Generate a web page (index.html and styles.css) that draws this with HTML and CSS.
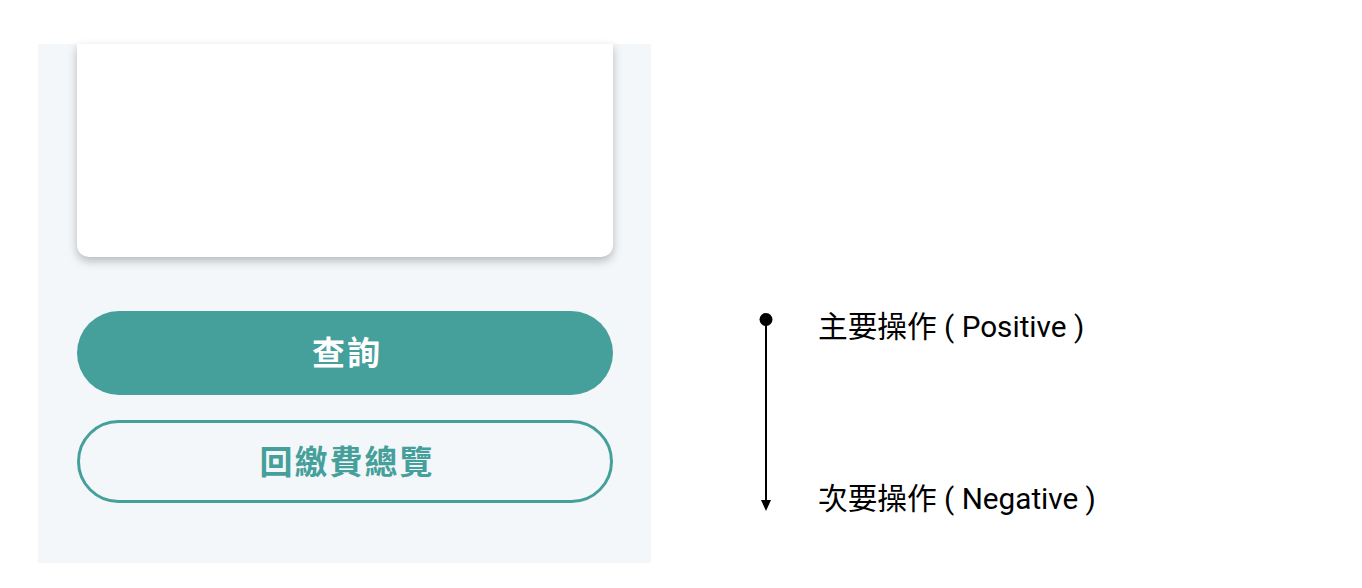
FILE: index.html
```html
<!DOCTYPE html>
<html lang="zh-Hant">
<head>
<meta charset="utf-8">
<title>Buttons</title>
<link rel="stylesheet" href="styles.css">
</head>
<body>
<div class="page">
  <section class="panel">
    <div class="card"></div>
    <button class="btn btn-primary">查詢</button>
    <button class="btn btn-secondary">回繳費總覽</button>
  </section>
  <section class="diagram">
    <svg class="axis" width="14" height="198" viewBox="0 0 14 198" aria-hidden="true">
      <circle cx="7" cy="6.5" r="6.5" fill="#000"/>
      <rect x="6" y="6" width="2" height="184" fill="#000"/>
      <polygon points="2,187 12,187 7,198" fill="#000"/>
    </svg>
    <div class="labels">
      <div class="label">主要操作 ( Positive )</div>
      <div class="label label-second">次要操作 ( Negative )</div>
    </div>
  </section>
</div>
</body>
</html>
```

FILE: styles.css
```css
html, body {
  margin: 0;
  padding: 0;
  background: #ffffff;
}

.page {
  display: flex;
  align-items: flex-start;
  padding: 44px 0 0 38px;
  font-family: Roboto, "Noto Sans CJK TC", sans-serif;
}

.panel {
  width: 613px;
  height: 519px;
  box-sizing: border-box;
  padding: 0 38px 0 39px;
  background: #f3f7fa;
  display: flex;
  flex-direction: column;
}

.card {
  height: 213px;
  background: #ffffff;
  border-radius: 0 0 12px 12px;
  box-shadow: 0 4px 10px rgba(0, 0, 0, 0.25);
}

.btn {
  display: flex;
  align-items: center;
  justify-content: center;
  box-sizing: border-box;
  width: 100%;
  border-radius: 42px;
  font-family: "Noto Sans CJK TC", sans-serif;
  font-weight: 700;
  font-size: 33px;
  letter-spacing: 2px;
  padding: 0 0 4px 4px;
  cursor: pointer;
}

.btn-primary {
  margin-top: 54px;
  height: 84px;
  background: #45a09b;
  color: #ffffff;
  border: none;
}

.btn-secondary {
  margin-top: 25px;
  height: 83px;
  background: transparent;
  color: #45a09b;
  border: 3px solid #45a09b;
}

.diagram {
  display: flex;
  align-items: flex-start;
  margin-left: 108px;
  margin-top: 269px;
}

.axis {
  display: block;
}

.labels {
  margin-left: 45px;
  margin-top: -4px;
  display: flex;
  flex-direction: column;
}

.label {
  font-size: 29.7px;
  line-height: 36px;
  color: #000000;
  white-space: nowrap;
}

.label-second {
  margin-top: 136px;
}
```
